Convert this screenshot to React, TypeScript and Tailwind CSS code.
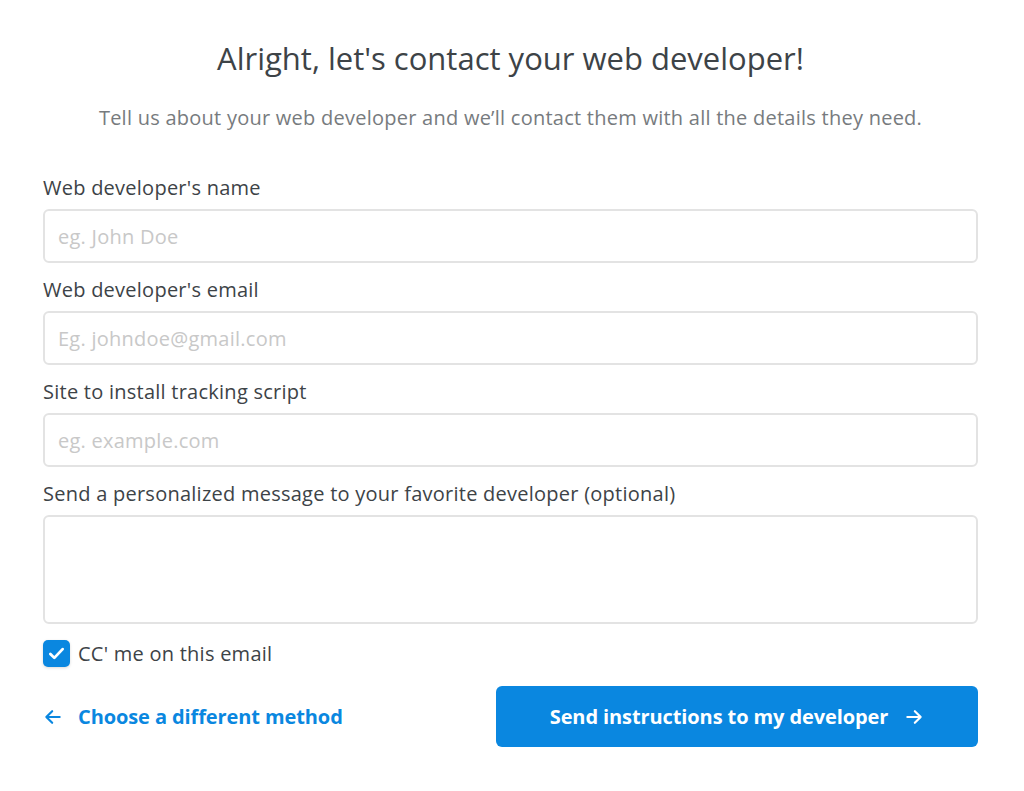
import React from "react";

function Field({ label, placeholder }: { label: string; placeholder: string }) {
  return (
    <div className="flex flex-col">
      <label className="text-[20px] leading-[24px] tracking-[0.25px] text-[#3d4347] mb-[9px]">{label}</label>
      <input
        className="h-[54px] w-full rounded-[6px] border-2 border-[#e3e3e3] px-[13px] text-[20px] tracking-[0.25px] text-[#3d4347] placeholder:text-[#c8c8c8] outline-none"
        placeholder={placeholder}
      />
    </div>
  );
}

export default function App() {
  return (
    <div className="w-[1024px] h-[791px] bg-white pl-[43px] pr-[46px] pt-[38px]" style={{ fontFamily: "'Open Sans', sans-serif" }}>
      <h1 className="text-center text-[31px] leading-[40px] text-[#3d4347]">Alright, let's contact your web developer!</h1>
      <p className="text-center text-[20px] leading-[24px] tracking-[0.25px] text-[#777b7e] mt-[28px]">
        Tell us about your web developer and we’ll contact them with all the details they need.
      </p>
      <div className="mt-[46px] flex flex-col gap-[15px]">
        <Field label="Web developer's name" placeholder="eg. John Doe" />
        <Field label="Web developer's email" placeholder="Eg. johndoe@gmail.com" />
        <Field label="Site to install tracking script" placeholder="eg. example.com" />
        <div className="flex flex-col">
          <label className="text-[20px] leading-[24px] tracking-[0.25px] text-[#3d4347] mb-[9px]">
            Send a personalized message to your favorite developer (optional)
          </label>
          <textarea className="h-[109px] w-full rounded-[6px] border-2 border-[#e3e3e3] px-[13px] py-[10px] text-[20px] resize-none outline-none" />
        </div>
      </div>
      <div className="mt-[16px] flex items-center gap-[8px]">
        <span className="flex h-[27px] w-[27px] items-center justify-center rounded-[5px] bg-[#0a87e0] shadow-[0_1px_3px_rgba(0,0,0,0.15)]">
          <svg width="21" height="21" viewBox="0 0 24 24" fill="none" stroke="white" strokeWidth="3.2" strokeLinecap="round" strokeLinejoin="round">
            <path d="M5 12.5l4.5 4.5L19 7" />
          </svg>
        </span>
        <span className="text-[20px] leading-[24px] tracking-[0.25px] text-[#3d4347]">CC' me on this email</span>
      </div>
      <div className="mt-[19px] flex items-center justify-between">
        <a className="flex items-center gap-[15px] text-[20px] font-bold tracking-[-0.1px] text-[#0a87e0]">
          <svg width="20" height="20" viewBox="0 0 24 24" fill="none" stroke="currentColor" strokeWidth="2.6" strokeLinecap="round" strokeLinejoin="round">
            <path d="M20 12H4M11 5l-7 7 7 7" />
          </svg>
          Choose a different method
        </a>
        <button className="flex h-[61px] w-[482px] items-center justify-center gap-[16px] rounded-[6px] bg-[#0a87e0] text-[20px] font-bold tracking-[-0.1px] text-white">
          Send instructions to my developer
          <svg width="20" height="20" viewBox="0 0 24 24" fill="none" stroke="currentColor" strokeWidth="2.6" strokeLinecap="round" strokeLinejoin="round">
            <path d="M4 12h16M13 5l7 7-7 7" />
          </svg>
        </button>
      </div>
    </div>
  );
}
